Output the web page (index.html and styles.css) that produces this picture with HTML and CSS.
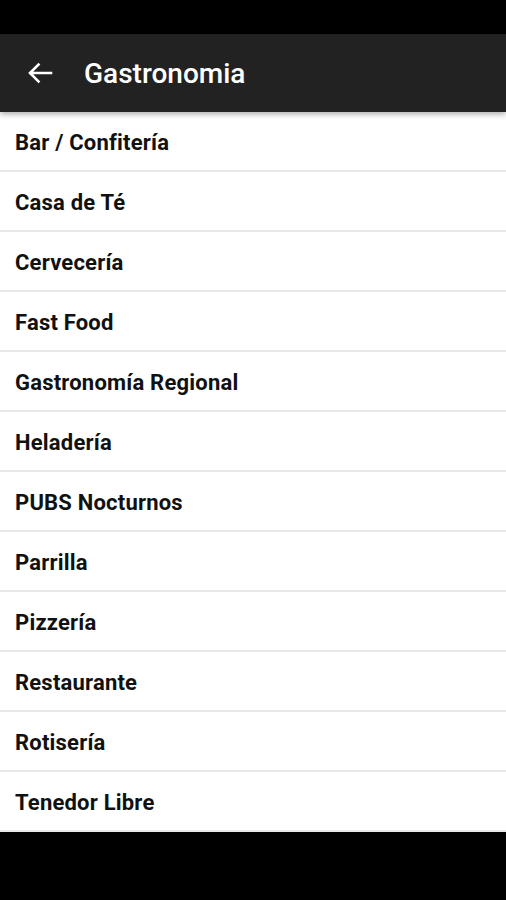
FILE: index.html
```html
<!DOCTYPE html>
<html lang="es">
<head>
    <meta charset="UTF-8">
    <meta name="viewport" content="width=device-width, initial-scale=1.0">
    <title>Gastronomia</title>
    <link rel="stylesheet" href="styles.css">
</head>
<body>
    <div class="status-bar"></div>
    <div class="toolbar">
        <button class="back-btn" aria-label="Volver">
            <svg width="26" height="22" viewBox="0 0 26 22"><path fill="none" stroke="#fff" stroke-width="2.6" stroke-linecap="square" d="M24 11H3.5M11.5 2.5L3 11l8.5 8.5"/></svg>
        </button>
        <h1 class="title">Gastronomia</h1>
    </div>
    <ul class="list">
        <li>Bar / Confitería</li>
        <li>Casa de Té</li>
        <li>Cervecería</li>
        <li>Fast Food</li>
        <li>Gastronomía Regional</li>
        <li>Heladería</li>
        <li>PUBS Nocturnos</li>
        <li>Parrilla</li>
        <li>Pizzería</li>
        <li>Restaurante</li>
        <li>Rotisería</li>
        <li>Tenedor Libre</li>
    </ul>
    <div class="nav-bar"></div>
</body>
</html>
```

FILE: styles.css
```css
* { margin: 0; padding: 0; box-sizing: border-box; font-family: Roboto, "Liberation Sans", Arial, sans-serif; }
html, body { height: 100%; }
body {
    display: flex;
    flex-direction: column;
    background: #fff;
}
.status-bar {
    height: 34px;
    background: #000;
}
.toolbar {
    height: 78px;
    background: #222;
    display: flex;
    align-items: center;
    padding-left: 27px;
    position: relative;
    z-index: 2;
    box-shadow: 0 2px 6px rgba(0, 0, 0, 0.35);
}
.back-btn {
    background: none;
    border: none;
    width: 26px;
    height: 22px;
    display: flex;
    align-items: center;
    justify-content: center;
}
.title {
    color: #fff;
    font-size: 28px;
    font-weight: 500;
    margin-left: 31px;
    padding-top: 1px;
}
.list {
    list-style: none;
}
.list li {
    height: 60px;
    display: flex;
    align-items: center;
    padding: 3px 0 0 15px;
    font-size: 22px;
    font-weight: 700;
    letter-spacing: 0.2px;
    color: #111;
    border-bottom: 2px solid #e8e8e8;
}
.nav-bar {
    flex: 1;
    background: #000;
}
```
